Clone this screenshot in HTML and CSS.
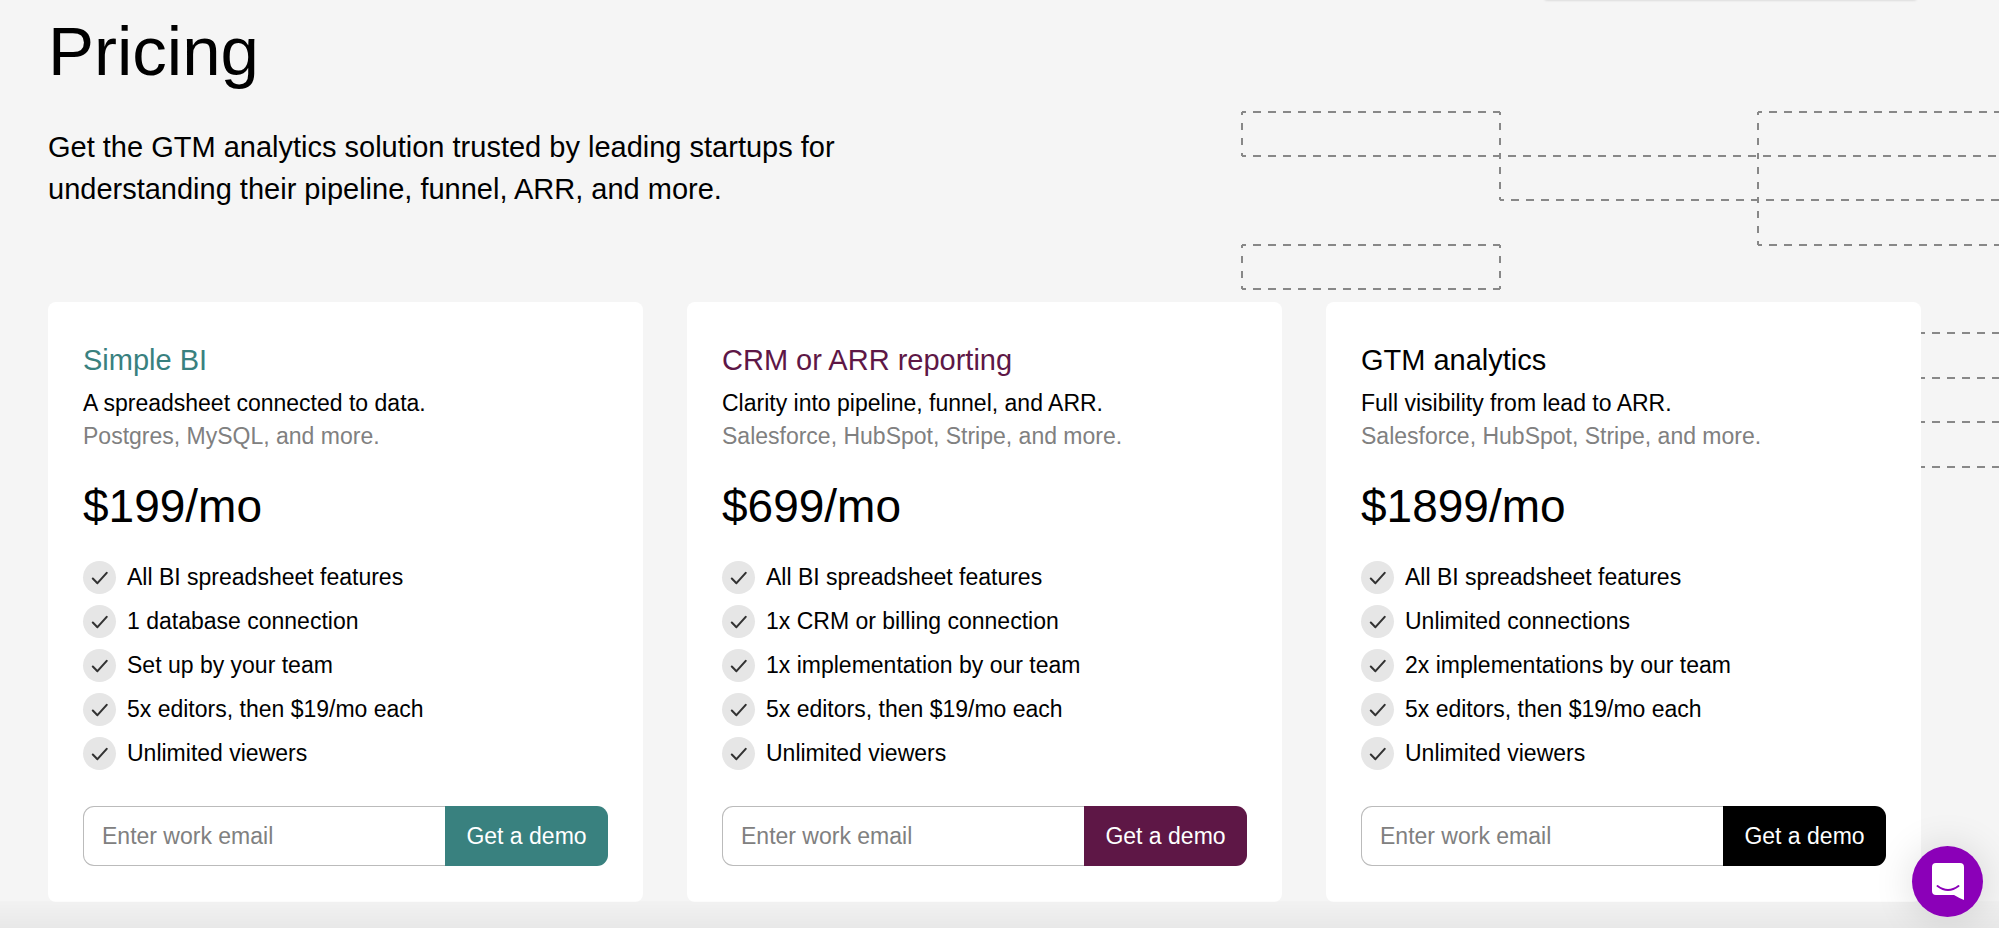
FILE: index.html
```html
<!DOCTYPE html>
<html lang="en">
<head>
  <meta charset="UTF-8" />
  <meta name="viewport" content="width=device-width, initial-scale=1" />
  <title>Pricing</title>
  <link rel="stylesheet" href="styles.css">
</head>
<body>
  <!-- Check mark shared by all feature lists -->
  <svg class="sprite" aria-hidden="true">
    <symbol id="check" viewBox="0 0 32 32">
      <path d="M9.500 17l4.500 4.500L23 11.500" fill="none" stroke="#333" stroke-width="2" stroke-linecap="round" stroke-linejoin="round" />
    </symbol>
  </svg>

  <main class="pricing">
    <div class="panel-edge"></div>

    <svg class="grid-lines" width="757" height="480" viewBox="0 0 757 480" aria-hidden="true">
      <g class="rows">
        <path d="M0 112H258M516 112H757" />
        <path d="M0 156H757" />
        <path d="M258 200H757" />
        <path d="M0 245H258M516 245H757" />
        <path d="M0 289H258" />
        <path d="M679 333H757M679 378H757M679 422H757M679 467H757" />
      </g>
      <g class="cols">
        <path d="M0 112V156M0 245V289" />
        <path d="M258 112V156M258 156V200M258 245V289" />
        <path d="M516 112V156M516 156V200M516 200V245" />
      </g>
    </svg>

    <header class="intro">
      <h1>Pricing</h1>
      <p>Get the GTM analytics solution trusted by leading startups for<br>understanding their pipeline, funnel, ARR, and more.</p>
    </header>

    <div class="plans">
      <section class="plan teal">
        <h2>Simple BI</h2>
        <p class="summary">A spreadsheet connected to data.</p>
        <p class="sources">Postgres, MySQL, and more.</p>
        <p class="price">$199/mo</p>
        <ul class="features">
          <li><svg class="check"><use href="#check" /></svg>All BI spreadsheet features</li>
          <li><svg class="check"><use href="#check" /></svg>1 database connection</li>
          <li><svg class="check"><use href="#check" /></svg>Set up by your team</li>
          <li><svg class="check"><use href="#check" /></svg>5x editors, then $19/mo each</li>
          <li><svg class="check"><use href="#check" /></svg>Unlimited viewers</li>
        </ul>
        <form class="demo-form">
          <input type="email" placeholder="Enter work email" aria-label="Work email for Simple BI">
          <button type="submit">Get a demo</button>
        </form>
      </section>

      <section class="plan plum">
        <h2>CRM or ARR reporting</h2>
        <p class="summary">Clarity into pipeline, funnel, and ARR.</p>
        <p class="sources">Salesforce, HubSpot, Stripe, and more.</p>
        <p class="price">$699/mo</p>
        <ul class="features">
          <li><svg class="check"><use href="#check" /></svg>All BI spreadsheet features</li>
          <li><svg class="check"><use href="#check" /></svg>1x CRM or billing connection</li>
          <li><svg class="check"><use href="#check" /></svg>1x implementation by our team</li>
          <li><svg class="check"><use href="#check" /></svg>5x editors, then $19/mo each</li>
          <li><svg class="check"><use href="#check" /></svg>Unlimited viewers</li>
        </ul>
        <form class="demo-form">
          <input type="email" placeholder="Enter work email" aria-label="Work email for CRM or ARR reporting">
          <button type="submit">Get a demo</button>
        </form>
      </section>

      <section class="plan black">
        <h2>GTM analytics</h2>
        <p class="summary">Full visibility from lead to ARR.</p>
        <p class="sources">Salesforce, HubSpot, Stripe, and more.</p>
        <p class="price">$1899/mo</p>
        <ul class="features">
          <li><svg class="check"><use href="#check" /></svg>All BI spreadsheet features</li>
          <li><svg class="check"><use href="#check" /></svg>Unlimited connections</li>
          <li><svg class="check"><use href="#check" /></svg>2x implementations by our team</li>
          <li><svg class="check"><use href="#check" /></svg>5x editors, then $19/mo each</li>
          <li><svg class="check"><use href="#check" /></svg>Unlimited viewers</li>
        </ul>
        <form class="demo-form">
          <input type="email" placeholder="Enter work email" aria-label="Work email for GTM analytics">
          <button type="submit">Get a demo</button>
        </form>
      </section>
    </div>
  </main>

  <div class="bottom-fade"></div>

  <button class="chat" type="button" aria-label="Open chat">
    <svg width="32" height="37" viewBox="0 0 32 37" aria-hidden="true">
      <path d="M4 0H28Q32 0 32 4V37Q27 35 22 32H4Q0 32 0 28V4Q0 0 4 0Z" fill="#fff" />
      <path d="M5.500 23Q16 31 26.500 23" fill="none" stroke="#8b00b8" stroke-width="2" stroke-linecap="round" />
    </svg>
  </button>
</body>
</html>
```

FILE: styles.css
```css
* {
  box-sizing: border-box;
}

body {
  margin: 0;
  background-color: #f5f5f5;
  color: #000;
  font-family: "Liberation Sans", Arial, sans-serif;
  font-size: 23px;
  line-height: 33px;
}

h1,
h2,
p,
ul {
  margin: 0;
  padding: 0;
  font-weight: 400;
}

.sprite {
  display: none;
}

.pricing {
  position: relative;
  padding: 0 78px 27px 48px;
}

/* Decoration behind the cards */
.panel-edge {
  position: absolute;
  top: -4px;
  right: 83px;
  width: 371px;
  height: 4px;
  box-shadow: 0 0 3px rgba(0, 0, 0, 0.2);
}

.grid-lines {
  position: absolute;
  top: 0;
  right: 0;
  fill: none;
  stroke: #888;
  stroke-width: 2;
  overflow: visible;
}

.rows {
  stroke-dasharray: 8 7;
  stroke-dashoffset: 4;
}

.cols {
  stroke-dasharray: 7 8;
  stroke-dashoffset: 4;
}

/* Intro */
.intro {
  position: relative;
  padding-top: 12px;
}

h1 {
  font-size: 69px;
  line-height: 80px;
}

.intro p {
  margin-top: 34px;
  font-size: 29px;
  line-height: 42px;
}

/* Plans */
.plans {
  position: relative;
  display: grid;
  grid-template-columns: repeat(3, minmax(0, 1fr));
  gap: 44px;
  margin-top: 92px;
}

.plan {
  padding: 40px 35px 36px;
  border-radius: 8px;
  background-color: #fff;
}

h2 {
  color: var(--accent);
  font-size: 29px;
  line-height: 36px;
}

.teal {
  --accent: #39817f;
}

.plum {
  --accent: #5e1746;
}

.black {
  --accent: #000;
}

.summary {
  margin-top: 9px;
}

.sources {
  color: #808080;
}

.price {
  margin-top: 25px;
  font-size: 46px;
  line-height: 56px;
}

/* Feature list */
.features {
  display: flex;
  flex-direction: column;
  gap: 11px;
  margin-top: 27px;
  list-style: none;
}

.features li {
  display: flex;
  align-items: center;
  gap: 11px;
}

.check {
  flex: none;
  width: 33px;
  height: 33px;
  border-radius: 50%;
  background-color: #e6e6e6;
}

/* Email form */
.demo-form {
  display: flex;
  height: 60px;
  margin-top: 36px;
}

.demo-form input,
.demo-form button {
  font: inherit;
}

.demo-form input {
  flex: 1;
  min-width: 0;
  padding: 0 18px;
  border: 1px solid #bbb;
  border-right: none;
  border-radius: 11px 0 0 11px;
  background-color: #fff;
}

.demo-form input::placeholder {
  color: #808080;
}

.demo-form button {
  width: 163px;
  padding: 0;
  border: none;
  border-radius: 0 11px 11px 0;
  background-color: var(--accent);
  color: #fff;
  cursor: pointer;
}

/* Fade at the bottom of the window */
.bottom-fade {
  position: fixed;
  right: 0;
  bottom: 0;
  left: 0;
  height: 27px;
  background: linear-gradient(rgba(0, 0, 0, 0.01), rgba(0, 0, 0, 0.05));
}

/* Chat launcher */
.chat {
  position: fixed;
  right: 16px;
  bottom: 11px;
  display: grid;
  place-items: center;
  width: 71px;
  height: 71px;
  padding: 0;
  border: none;
  border-radius: 50%;
  background-color: #8b00b8;
  box-shadow: 0 2px 40px rgba(0, 0, 0, 0.14);
  cursor: pointer;
}
```
